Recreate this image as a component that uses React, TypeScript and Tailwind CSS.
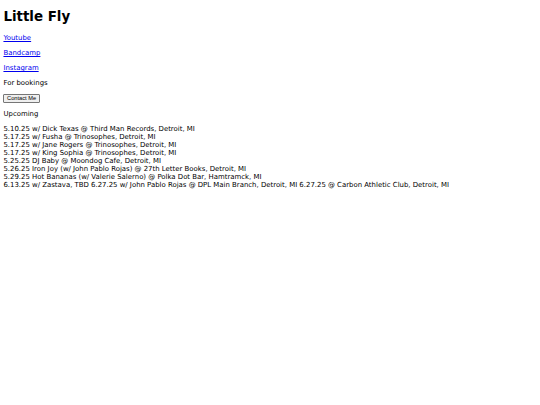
export default function App() {
  const shows = [
    '5.10.25 w/ Dick Texas @ Third Man Records, Detroit, MI',
    '5.17.25 w/ Fusha @ Trinosophes, Detroit, MI',
    '5.17.25 w/ Jane Rogers @ Trinosophes, Detroit, MI',
    '5.17.25 w/ King Sophia @ Trinosophes, Detroit, MI',
    '5.25.25 DJ Baby @ Moondog Cafe, Detroit, MI',
    '5.26.25 Iron Joy (w/ John Pablo Rojas) @ 27th Letter Books, Detroit, MI',
    '5.29.25 Hot Bananas (w/ Valerie Salerno) @ Polka Dot Bar, Hamtramck, MI',
    '6.13.25 w/ Zastava, TBD 6.27.25 w/ John Pablo Rojas @ DPL Main Branch, Detroit, MI 6.27.25 @ Carbon Athletic Club, Detroit, MI',
  ];

  return (
    <div className="min-h-screen bg-white px-[3.44px] pt-[9px] font-['DejaVu_Sans',sans-serif] text-[6.93px] leading-[8px] text-black whitespace-nowrap">
      <h1 className="mb-[9.2px] text-[13.4px] font-bold leading-[16px]">Little Fly</h1>

      <p className="mb-[6.9px]">
        <a href="#" className="text-[#0000ee] underline">Youtube</a>
      </p>
      <p className="mb-[6.9px]">
        <a href="#" className="text-[#0000ee] underline">Bandcamp</a>
      </p>
      <p className="mb-[6.9px]">
        <a href="#" className="text-[#0000ee] underline">Instagram</a>
      </p>

      <p className="mb-[6.9px]">For bookings</p>

      <div className="mb-[6.9px] flex">
        <button className="rounded-[1px] border border-[#767676] bg-[#efefef] px-[2.6px] py-[0.5px] font-['Liberation_Sans',Arial,sans-serif] text-[5.7px] leading-[6.4px] text-black">
          Contact Me
        </button>
      </div>

      <p className="mb-[6.9px]">Upcoming</p>

      <div>
        {shows.map((s, i) => (
          <div key={i}>{s}</div>
        ))}
      </div>
    </div>
  );
}
